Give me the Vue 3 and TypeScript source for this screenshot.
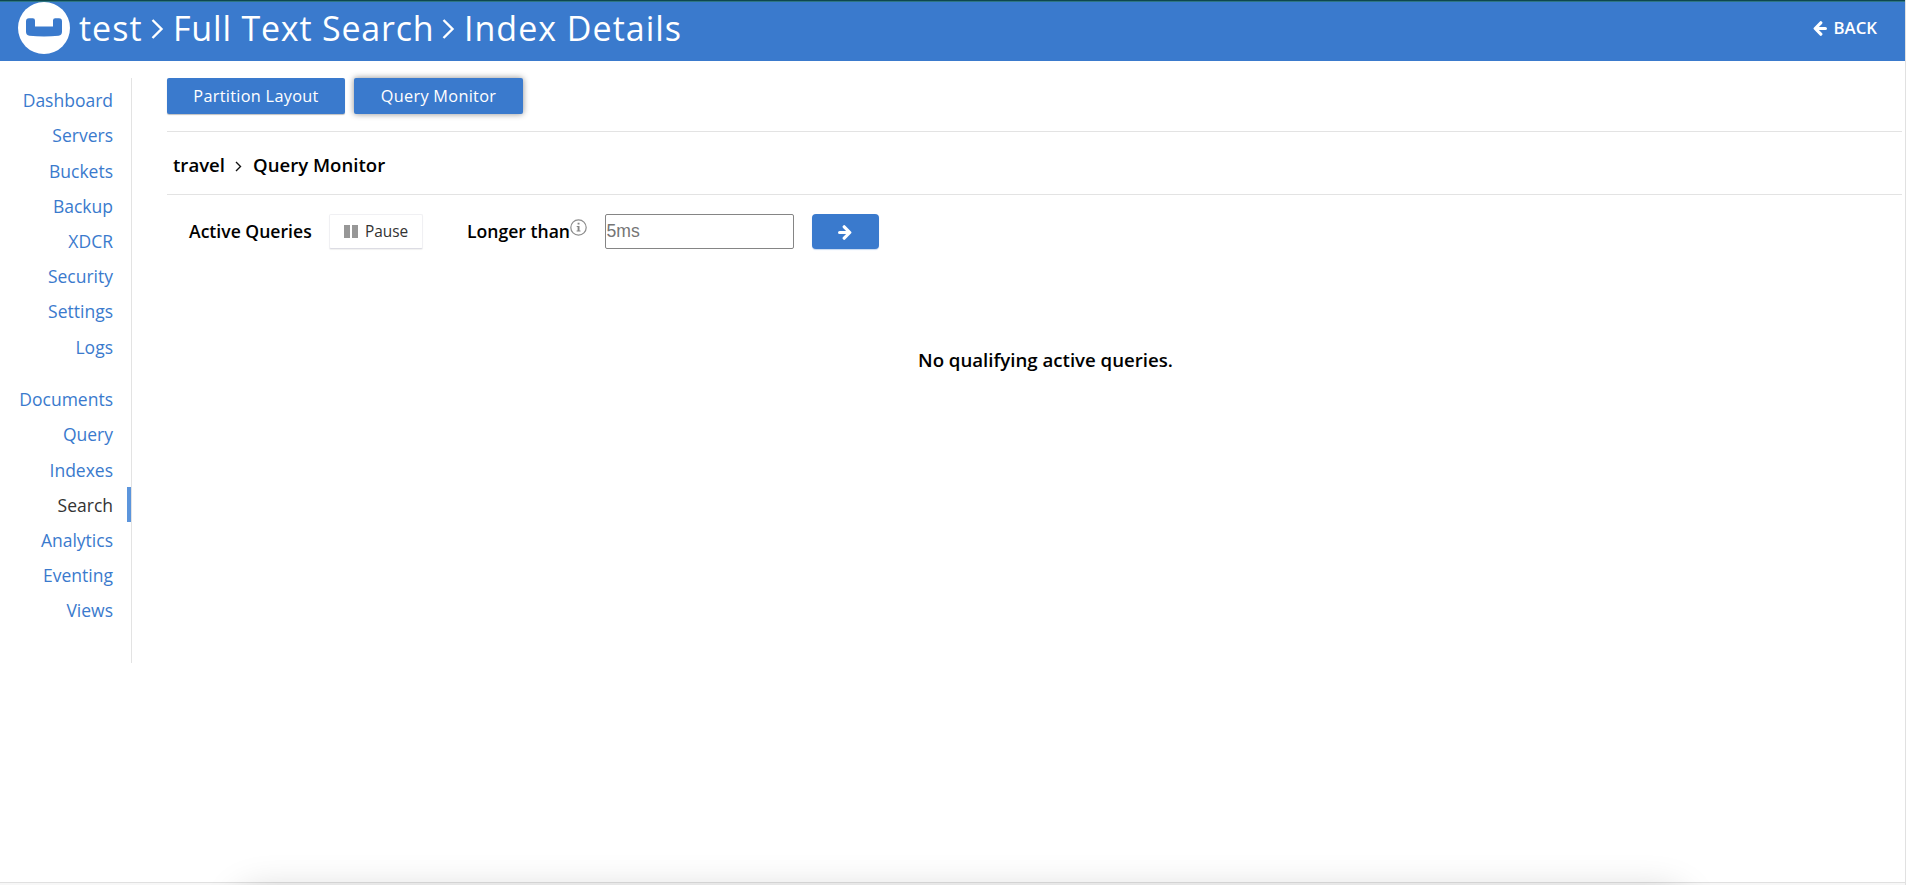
<script setup lang="ts">
interface NavItem {
  label: string
  active?: boolean
}

const navGroups: NavItem[][] = [
  [
    { label: 'Dashboard' },
    { label: 'Servers' },
    { label: 'Buckets' },
    { label: 'Backup' },
    { label: 'XDCR' },
    { label: 'Security' },
    { label: 'Settings' },
    { label: 'Logs' },
  ],
  [
    { label: 'Documents' },
    { label: 'Query' },
    { label: 'Indexes' },
    { label: 'Search', active: true },
    { label: 'Analytics' },
    { label: 'Eventing' },
    { label: 'Views' },
  ],
]
</script>

<template>
  <div class="page">
    <header class="topbar">
      <svg class="logo" width="52" height="52" viewBox="0 0 52 52">
        <circle cx="26" cy="26" r="26" fill="#fff" />
        <path
          d="M11 16.200h3.800q2.200 0 2.200 2.400v5.900h18v-5.900q0-2.400 2.200-2.400H41q3 0 3 3.200v10.400q0 3.400-3.400 4Q26 35.200 11.400 33.800Q8 33.200 8 29.800V19.400q0-3.200 3-3.200z"
          fill="#3a7acd"
        />
      </svg>
      <h1 class="crumbs">
        <span class="crumb test">test</span>
        <svg class="chev" width="13" height="22" viewBox="0 0 13 22"><path d="M1.500 2L10.500 11L1.500 20" /></svg>
        <span class="crumb section">Full Text Search</span>
        <svg class="chev" width="13" height="22" viewBox="0 0 13 22"><path d="M1.500 2L10.500 11L1.500 20" /></svg>
        <span class="crumb">Index Details</span>
      </h1>
      <a class="back">
        <svg width="14" height="15" viewBox="0 0 14 15"><path d="M7.800 1.800L2.200 7.500L7.800 13.200M2.600 7.500H12.400" /></svg>
        <span>BACK</span>
      </a>
    </header>

    <div class="body">
      <nav class="sidebar">
        <ul v-for="(group, i) in navGroups" :key="i" class="group">
          <li v-for="item in group" :key="item.label" class="item" :class="{ active: item.active }">
            {{ item.label }}
          </li>
        </ul>
      </nav>

      <main class="content">
        <div class="tabs">
          <button class="tab layout">Partition Layout</button>
          <button class="tab monitor">Query Monitor</button>
        </div>
        <div class="path">
          <span class="index-name">travel</span>
          <svg width="7" height="11" viewBox="0 0 7 11"><path d="M1 1L5.500 5.500L1 10" /></svg>
          <span class="view-name">Query Monitor</span>
        </div>
        <div class="filters">
          <span class="label active-label">Active Queries</span>
          <button class="pause">
            <svg width="14" height="13" viewBox="0 0 14 13"><path d="M0 0h6v13H0zM8 0h6v13H8z" fill="#979797" /></svg>
            <span>Pause</span>
          </button>
          <span class="label longer">Longer than</span>
          <svg class="info" width="17" height="17" viewBox="0 0 17 17">
            <circle cx="8.500" cy="8.500" r="7.700" fill="none" stroke="#8d8d8d" stroke-width="1.200" />
            <path d="M7.600 3.800h1.900v1.800H7.600zM6.700 7h2.800v4.500h1v1H6.600v-1h1V8h-.9z" fill="#858585" />
          </svg>
          <input class="threshold" type="text" placeholder="5ms" />
          <button class="go">
            <svg width="14" height="15" viewBox="0 0 14 15"><path d="M6.200 1.800L11.800 7.500L6.200 13.200M11.400 7.500H1.600" /></svg>
          </button>
        </div>
        <p class="empty">No qualifying active queries.</p>
      </main>
    </div>
    <div class="shade"></div>
    <footer class="edge"></footer>
  </div>
</template>

<style>
body {
  margin: 0;
  overflow: hidden;
}
</style>

<style scoped>
* {
  box-sizing: border-box;
}
.page {
  position: relative;
  display: flex;
  flex-direction: column;
  width: 1906px;
  height: 885px;
  overflow: hidden;
  background: #fff;
  border-right: 1px solid #e1e1e1;
  font-family: 'Open Sans', sans-serif;
  color: #000;
}
button {
  padding: 0;
  border: 0;
  font-family: inherit;
  color: #fff;
  background: #3a7acd;
}
svg {
  flex: none;
  display: block;
}
.topbar {
  display: flex;
  flex: none;
  height: 61px;
  padding: 0 28px 0 18px;
  background: linear-gradient(#0e474e 0 1px, #2d7582 1px 2px, #3a7acd 2px);
  color: #fff;
}
.logo {
  margin-top: 2px;
}
.crumbs {
  display: flex;
  margin: 0;
  padding: 5px 0 0 9px;
  font-size: 34px;
  font-weight: 400;
  line-height: 46px;
  white-space: nowrap;
  letter-spacing: 1px;
}
.crumb.test {
  width: 72px;
}
.crumb.section {
  width: 269px;
  letter-spacing: 0.8px;
}
.chev {
  margin: 13px 9px 0 0;
}
.chev path {
  fill: none;
  stroke: #fff;
  stroke-width: 2.4;
}
.back {
  display: flex;
  margin-left: auto;
  padding-top: 16px;
  gap: 6px;
  font-size: 16.8px;
  font-weight: 600;
  line-height: 24px;
}
.back svg {
  margin-top: 5px;
}
.back path,
.go path {
  fill: none;
  stroke: #fff;
  stroke-width: 3.2;
  stroke-linecap: round;
  stroke-linejoin: round;
}
.body {
  display: flex;
  flex: 1;
  padding-top: 17px;
}
.sidebar {
  width: 132px;
  height: 585px;
  padding-top: 4.2px;
  border-right: 1px solid #e3e3e3;
}
.group {
  margin: 0 0 17.6px;
  padding: 0;
  list-style: none;
}
.item {
  height: 35.2px;
  padding-right: 14px;
  border-right: 4px solid transparent;
  text-align: right;
  font-size: 17.5px;
  line-height: 37px;
  color: #3a7acd;
}
.item.active {
  color: #333;
  border-right-color: #5c95dc;
}
.content {
  flex: 1;
  padding: 0 3px 0 35px;
}
.tabs {
  display: flex;
  gap: 9px;
  height: 54px;
  border-bottom: 1px solid #e3e3e3;
}
.tab {
  height: 36px;
  border-radius: 2px;
  font-size: 16.3px;
  line-height: 36px;
  letter-spacing: 0.3px;
  box-shadow: 0 1px 1px rgba(0, 0, 0, 0.25);
}
.layout {
  width: 178px;
}
.monitor {
  width: 169px;
  box-shadow: 0 0 6px rgba(0, 0, 0, 0.45);
}
.path {
  display: flex;
  height: 63px;
  padding-left: 6px;
  border-bottom: 1px solid #e3e3e3;
  font-size: 18.6px;
  font-weight: 600;
  line-height: 66px;
}
.path span {
  white-space: nowrap;
}
.index-name {
  width: 62px;
}
.path svg {
  margin: 29px 11px 0 0;
}
.path path {
  fill: none;
  stroke: #111;
  stroke-width: 1.4;
}
.filters {
  display: flex;
  height: 35px;
  margin-top: 19px;
  padding-left: 22px;
}
.label {
  font-size: 17.6px;
  font-weight: 600;
  line-height: 34px;
  white-space: nowrap;
}
.active-label {
  width: 140px;
}
.pause {
  display: flex;
  width: 94px;
  padding: 10px 0 0 13.5px;
  gap: 7.5px;
  border: 1px solid #f0f0f3;
  border-bottom-color: #dcdce3;
  border-radius: 2px;
  background: #fff;
  color: #333;
  font-size: 15.4px;
  line-height: 14px;
  box-shadow: 0 1px 1px rgba(0, 0, 0, 0.06);
}
.longer {
  width: 103px;
  margin-left: 44px;
}
.info {
  margin: 5px 18px 0 0;
}
.threshold {
  width: 189px;
  height: 35px;
  padding: 0 0.5px;
  border: 1px solid #858585;
  border-radius: 2px;
  outline: 0;
  font-family: 'Liberation Sans', sans-serif;
  font-size: 17.6px;
  background: #fff;
}
.threshold::placeholder {
  color: #757575;
}
.go {
  display: flex;
  align-items: center;
  justify-content: center;
  width: 67px;
  margin-left: 18px;
  padding: 2px 1px 0 0;
  border-radius: 4px;
  box-shadow: 0 1px 1px rgba(58, 122, 205, 0.3);
}
.empty {
  margin: 98px 0 0 22px;
  text-align: center;
  font-size: 18.65px;
  font-weight: 600;
  line-height: 26px;
}
/* Soft shadow rising from the lower window edge */
.shade {
  position: absolute;
  left: 240px;
  top: 894px;
  width: 1442px;
  height: 60px;
  border-radius: 20px;
  box-shadow: 0 0 36px 4px rgba(0, 0, 0, 0.17);
}
.edge {
  flex: none;
  height: 3px;
  border-top: 1px solid rgba(0, 0, 0, 0.12);
  background: rgba(0, 0, 0, 0.03);
  background-clip: padding-box;
}
</style>
